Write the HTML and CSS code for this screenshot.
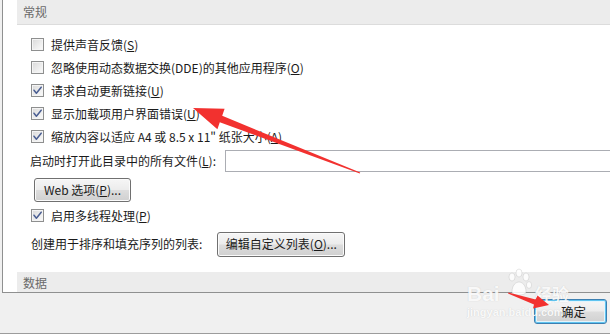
FILE: index.html
```html
<!DOCTYPE html>
<html lang="zh-CN">
<head>
<meta charset="utf-8">
<title>Excel 选项 - 高级</title>
<link rel="stylesheet" href="styles.css">
</head>
<body>
<div class="window">
  <div class="panel">
    <div class="band">常规</div>
    <div class="opts">
      <div class="row"><span class="cb"></span><span>提供声音反馈(<u>S</u>)</span></div>
      <div class="row"><span class="cb"></span><span>忽略使用动态数据交换(DDE)的其他应用程序(<u>O</u>)</span></div>
      <div class="row"><span class="cb"><svg viewBox="0 0 11 11"><path d="M2 5.2 L4.4 8.2 L9.2 2.2"/></svg></span><span>请求自动更新链接(<u>U</u>)</span></div>
      <div class="row"><span class="cb"><svg viewBox="0 0 11 11"><path d="M2 5.2 L4.4 8.2 L9.2 2.2"/></svg></span><span>显示加载项用户界面错误(<u>U</u>)</span></div>
      <div class="row"><span class="cb"><svg viewBox="0 0 11 11"><path d="M2 5.2 L4.4 8.2 L9.2 2.2"/></svg></span><span>缩放内容以适应 A4 或 8.5 x 11" 纸张大小(<u>A</u>)</span></div>
      <div class="row-field"><span>启动时打开此目录中的所有文件(<u>L</u>):</span><span class="field"></span></div>
      <div class="row-btn"><span class="btn btn-web">Web 选项(<u>P</u>)...</span></div>
      <div class="row row-multi"><span class="cb"><svg viewBox="0 0 11 11"><path d="M2 5.2 L4.4 8.2 L9.2 2.2"/></svg></span><span>启用多线程处理(<u>P</u>)</span></div>
      <div class="row-list"><span>创建用于排序和填充序列的列表:</span><span class="btn btn-list">编辑自定义列表(<u>O</u>)...</span></div>
    </div>
    <div class="band band-data">数据</div>
  </div>
  <div class="footer"><span class="btn btn-ok">确定</span></div>

  <div class="watermark">
    <svg class="paw" viewBox="0 0 30 30">
      <ellipse cx="8" cy="9" rx="3" ry="4"/>
      <ellipse cx="15" cy="5" rx="3" ry="4"/>
      <ellipse cx="22" cy="9" rx="3" ry="4"/>
      <ellipse cx="25" cy="17" rx="2.6" ry="3.4"/>
      <path d="M8 24 C8 17 12 14 15 14 C18 14 22 17 22 24 C22 28 8 28 8 24 Z"/>
    </svg>
    <span class="wm-bai">Bai</span><span class="wm-jy">经验</span>
    <span class="wm-url">jingyan.baidu.com</span>
  </div>

  <svg class="arrows" viewBox="0 0 610 335" width="610" height="335">
    <polygon points="193,108 224.6,108.7 222.2,115.8 360.2,172.6 359.8,173.4 219.8,122.2 217.4,129.3"/>
    <polygon points="549,305 533,308.5 534,304.5 508,293.4 508.4,292.6 535.6,299.6 537.5,295.5"/>
  </svg>
</div>
</body>
</html>
```

FILE: styles.css
```css
* { box-sizing: border-box; }

html, body {
  margin: 0;
  padding: 0;
}

body {
  width: 610px;
  height: 335px;
  overflow: hidden;
  background: #ffffff;
  font-family: "Noto Sans CJK SC", "Noto Sans", sans-serif;
  font-size: 12px;
  color: #1b1b1b;
}

.window {
  position: relative;
  width: 610px;
  height: 334px;
  background: #f0f0f0;
  border-bottom: 1px solid #9c9c9c;
  display: flex;
  flex-direction: column;
}

.panel {
  margin-left: 2px;
  height: 293px;
  background: #ffffff;
  border-left: 1px solid #8f9090;
  border-bottom: 1px solid #8f9090;
  display: flex;
  flex-direction: column;
}

.band {
  margin-left: 14px;
  height: 25px;
  background: #ececec;
  border-bottom: 1px solid #dcdcdc;
  color: #6a6a6a;
  font-size: 12px;
  line-height: 24px;
  padding-left: 6px;
}

.band-data {
  height: 20px;
  border-bottom: none;
  line-height: 21px;
  margin-top: auto;
}

.opts {
  padding-top: 8px;
  padding-left: 28px;
  display: flex;
  flex-direction: column;
}

.row {
  height: 23px;
  display: flex;
  align-items: center;
  gap: 7px;
  line-height: 16px;
  white-space: nowrap;
}

u { text-decoration: underline; text-underline-offset: 1px; }

.cb {
  width: 13px;
  height: 13px;
  flex: none;
  border: 1px solid #8e8f8f;
  background: linear-gradient(135deg, #d8d8d8 0%, #eeeeee 60%, #fbfbfb 100%);
  box-shadow: inset 0 0 0 1px #f4f4f4;
  position: relative;
}

.cb svg {
  position: absolute;
  left: 0;
  top: 0;
  width: 11px;
  height: 11px;
  fill: none;
  stroke: #4a5e92;
  stroke-width: 1.5;
  stroke-linecap: round;
  stroke-linejoin: round;
}

.row-field {
  height: 26px;
  display: flex;
  align-items: center;
  gap: 9px;
  margin-left: -1px;
  white-space: nowrap;
  line-height: 16px;
}

.field {
  flex: 1;
  height: 22px;
  background: #ffffff;
  border: 1px solid #abadb3;
  border-right: none;
}

.row-btn {
  margin-top: 4px;
  display: flex;
}

.btn {
  display: inline-flex;
  align-items: center;
  justify-content: center;
  height: 24px;
  border: 1px solid #707070;
  border-radius: 3px;
  background: linear-gradient(#f6f6f6 0%, #ececec 48%, #dddddd 52%, #d0d0d0 100%);
  box-shadow: inset 0 0 0 1px #fbfbfb;
  color: #1b1b1b;
  font-size: 12px;
  line-height: 16px;
  white-space: nowrap;
}

.btn-web {
  width: 97px;
  margin-left: 3px;
}

.row-multi {
  margin-top: 2px;
}

.row-list {
  margin-top: 5px;
  height: 24px;
  display: flex;
  align-items: center;
  white-space: nowrap;
  line-height: 16px;
}

.btn-list {
  margin-left: 15px;
  width: 128px;
  height: 25px;
}

.footer {
  height: 40px;
  display: flex;
  justify-content: flex-end;
  align-items: flex-start;
  padding-top: 6px;
  padding-right: 3px;
}

.btn-ok {
  width: 73px;
  height: 25px;
  border-color: #3c7fb1;
  box-shadow: inset 0 0 0 1px #5fc4f0, inset 0 0 0 2px #e3f4fc;
  font-size: 12.5px;
  padding-left: 6px;
}

.arrows {
  position: absolute;
  left: 0;
  top: 0;
  pointer-events: none;
}

.arrows polygon {
  fill: #f2312f;
}

.watermark {
  position: absolute;
  left: 464px;
  top: 266px;
  width: 120px;
  height: 60px;
  color: rgba(255, 255, 255, 0.9);
  text-shadow: 0 0 1px rgba(130, 130, 130, 0.35);
  pointer-events: none;
}

.paw {
  position: absolute;
  left: 40px;
  top: 2px;
  width: 30px;
  height: 30px;
  fill: rgba(255, 255, 255, 0.85);
  stroke: rgba(150, 150, 150, 0.3);
  stroke-width: 0.8;
}

.wm-bai, .wm-jy {
  position: absolute;
  top: 18px;
  font-family: "Liberation Sans", "Noto Sans", sans-serif;
  font-size: 21px;
  font-weight: bold;
  line-height: 19px;
}

.wm-bai { left: 3px; }
.wm-jy {
  left: 71px;
  font-family: "Noto Sans CJK SC", sans-serif;
  font-size: 17px;
}

.wm-url {
  position: absolute;
  left: 3px;
  top: 40px;
  font-family: "Liberation Sans", sans-serif;
  font-size: 11px;
  line-height: 13px;
  font-weight: bold;
}
```
